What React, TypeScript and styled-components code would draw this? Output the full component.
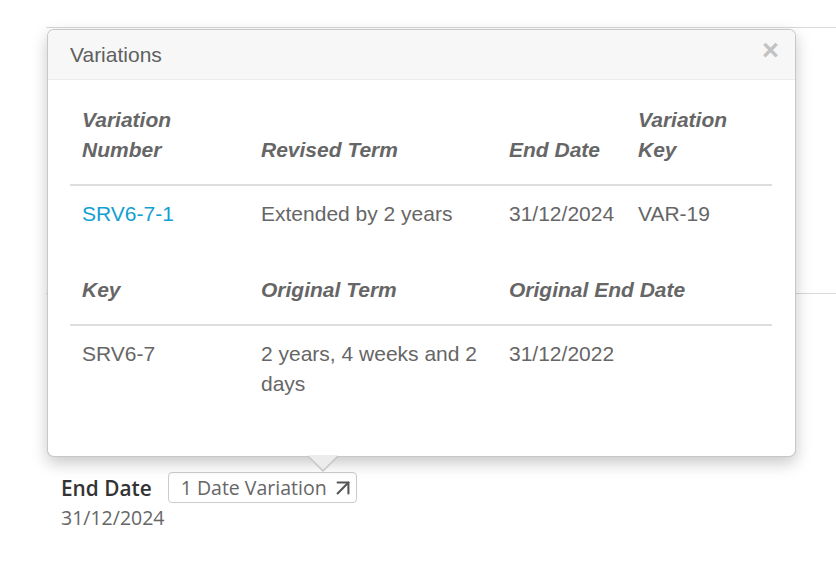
import React from "react";
import styled, { createGlobalStyle } from "styled-components";
import { ArrowUpRight } from "lucide-react";

const GlobalStyle = createGlobalStyle`
  body {
    margin: 0;
    background: #fff;
  }
  * {
    box-sizing: border-box;
  }
`;

const Page = styled.div`
  position: relative;
  width: 836px;
  height: 561px;
  overflow: hidden;
  padding-top: 27px;
`;

const Rule = styled.div<{ $gap?: number }>`
  margin-left: 46px;
  margin-bottom: ${({ $gap }) => $gap ?? 0}px;
  border-top: 1px solid #d9d9d9;
`;

const Field = styled.div`
  padding-left: 61px;
  font-family: "Open Sans", "Liberation Sans", sans-serif;
`;

const FieldHead = styled.div`
  display: flex;
  align-items: center;
  gap: 16px;
`;

const Label = styled.span`
  font-size: 20.8px;
  font-weight: 600;
  color: #333;
`;

const Badge = styled.span`
  display: inline-flex;
  align-items: center;
  gap: 3px;
  height: 31px;
  padding: 0 0 0 12px;
  border: 1px solid #ccc;
  border-radius: 4px;
  font-size: 19.5px;
  color: #666;
  svg {
    color: #555;
  }
`;

const Value = styled.div`
  margin-top: 1px;
  font-size: 19.5px;
  color: #666;
`;

const Popover = styled.div`
  position: absolute;
  left: 47px;
  top: 29px;
  width: 749px;
  height: 428px;
  background: #fff;
  border: 1px solid rgba(0, 0, 0, 0.22);
  border-radius: 7px;
  box-shadow: 0 6px 16px rgba(0, 0, 0, 0.22);
  font-family: "Liberation Sans", Arial, sans-serif;
  color: #666;

  &::before,
  &::after {
    content: "";
    position: absolute;
    left: 259px;
    border-style: solid;
    border-color: transparent;
  }
  &::before {
    bottom: -16px;
    border-width: 16px 16px 0;
    border-top-color: #c4c4c4;
  }
  &::after {
    bottom: -14px;
    left: 260px;
    border-width: 15px 15px 0;
    border-top-color: #ececec;
  }
`;

const Header = styled.div`
  position: relative;
  height: 50px;
  display: flex;
  align-items: center;
  padding: 0 22px;
  background: #f7f7f7;
  border-bottom: 1px solid #ebebeb;
  border-radius: 6px 6px 0 0;
`;

const Title = styled.h3`
  margin: 0;
  font-size: 21px;
  font-weight: 400;
  color: #5f5f5f;
`;

const Close = styled.button`
  position: absolute;
  right: 16px;
  top: 5px;
  padding: 0;
  border: 0;
  background: none;
  font-family: "Liberation Sans", Arial, sans-serif;
  font-size: 29px;
  font-weight: 700;
  line-height: 30px;
  color: #c2c2c2;
  cursor: pointer;
`;

const Body = styled.div`
  padding: 6px 22px 0;
`;

const Table = styled.table`
  width: 702px;
  table-layout: fixed;
  border-collapse: collapse;
  margin-bottom: 13px;
  font-size: 21px;
  line-height: 30px;
`;

const Th = styled.th`
  padding: 19px 12px;
  text-align: left;
  vertical-align: bottom;
  font-weight: 700;
  font-style: italic;
  color: #666;
  border-bottom: 2px solid #ddd;
`;

const Td = styled.td`
  padding: 13px 12px 14px;
  vertical-align: top;
  color: #666;
`;

const Link = styled.a`
  color: #12a0d2;
  text-decoration: none;
`;

const Cols = ({ widths }: { widths: number[] }) => (
  <colgroup>
    {widths.map((w, i) => (
      <col key={i} style={{ width: w }} />
    ))}
  </colgroup>
);

const variations = [
  { number: "SRV6-7-1", term: "Extended by 2 years", end: "31/12/2024", key: "VAR-19" },
];

const originals = [
  { key: "SRV6-7", term: "2 years, 4 weeks and 2 days", end: "31/12/2022" },
];

export default function App() {
  return (
    <Page>
      <GlobalStyle />
      <Rule $gap={265} />
      <Rule $gap={178} />
      <Field>
        <FieldHead>
          <Label>End Date</Label>
          <Badge>
            1 Date Variation
            <ArrowUpRight size={26} strokeWidth={1.9} />
          </Badge>
        </FieldHead>
        <Value>31/12/2024</Value>
      </Field>

      <Popover>
        <Header>
          <Title>Variations</Title>
          <Close aria-label="Close">×</Close>
        </Header>
        <Body>
          <Table>
            <Cols widths={[179, 248, 129, 146]} />
            <thead>
              <tr>
                <Th>Variation Number</Th>
                <Th>Revised Term</Th>
                <Th>End Date</Th>
                <Th>Variation Key</Th>
              </tr>
            </thead>
            <tbody>
              {variations.map((v) => (
                <tr key={v.number}>
                  <Td>
                    <Link href="#">{v.number}</Link>
                  </Td>
                  <Td>{v.term}</Td>
                  <Td>{v.end}</Td>
                  <Td>{v.key}</Td>
                </tr>
              ))}
            </tbody>
          </Table>
          <Table>
            <Cols widths={[179, 248, 275]} />
            <thead>
              <tr>
                <Th>Key</Th>
                <Th>Original Term</Th>
                <Th>Original End Date</Th>
              </tr>
            </thead>
            <tbody>
              {originals.map((o) => (
                <tr key={o.key}>
                  <Td>{o.key}</Td>
                  <Td>{o.term}</Td>
                  <Td>{o.end}</Td>
                </tr>
              ))}
            </tbody>
          </Table>
        </Body>
      </Popover>
    </Page>
  );
}
